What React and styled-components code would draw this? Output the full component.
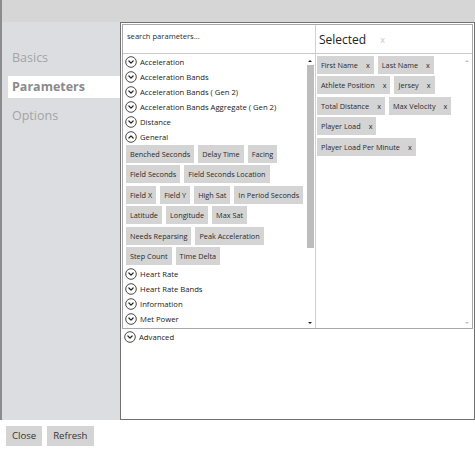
import React from 'react'
import styled, { createGlobalStyle } from 'styled-components'

const GlobalStyle = createGlobalStyle`
  html, body {
    margin: 0;
    padding: 0;
    background: #fff;
  }
  body {
    font-family: "Open Sans", "Noto Sans", sans-serif;
    color: #222;
  }
  * { box-sizing: border-box; }
`

const Frame = styled.div`
  width: 475px;
  height: 451px;
  display: flex;
  flex-direction: column;
`

const Upper = styled.div`
  height: 420px;
  display: flex;
  flex-direction: column;
  border-left: 2px solid #8c8c8c;
`

const TopBar = styled.div`
  height: 22px;
  flex-shrink: 0;
  background: #d6d6d6;
`

const Main = styled.div`
  flex: 1;
  display: flex;
  min-height: 0;
`

const Sidebar = styled.nav`
  width: 118px;
  flex-shrink: 0;
  background: #dcdde0;
  padding: 25px 0 0 6px;
  display: flex;
  flex-direction: column;
  gap: 7px;
`

const SideItem = styled.div`
  height: 22px;
  line-height: 22px;
  padding-left: 4px;
  font-size: 12.5px;
  font-weight: ${(p) => (p.active ? 700 : 400)};
  color: ${(p) => (p.active ? '#8a8a8a' : '#a4a4a4')};
  background: ${(p) => (p.active ? '#fff' : 'transparent')};
`

const Content = styled.section`
  flex: 1;
  display: flex;
  flex-direction: column;
  border: 1px solid #727272;
  background: #fff;
  padding: 1px 1px 0 1px;
`

const InnerBox = styled.div`
  height: 305px;
  border: 1px solid #a8a8a8;
  display: grid;
  grid-template-columns: 192px 1fr;
  grid-template-rows: 29px 1fr;
`

const SearchCell = styled.div`
  border-bottom: 1px solid #c8c8c8;
  padding: 6px 4px;
  font-size: 7.6px;
  color: #2a2a2a;
`

const HeaderCell = styled.div`
  border-bottom: 1px solid #c8c8c8;
  border-left: 1px solid #d0d0d0;
  padding: 3px 3px;
  display: flex;
  align-items: center;
  gap: 14px;
  font-size: 12px;
  color: #222;
`

const FaintX = styled.span`
  font-size: 9px;
  color: #c8c8c8;
`

const Pane = styled.div`
  display: flex;
  min-height: 0;
  overflow: hidden;
  border-left: ${(p) => (p.divided ? '1px solid #d0d0d0' : 'none')};
`

const ListBody = styled.div`
  flex: 1;
  display: flex;
  flex-direction: column;
  overflow: hidden;
`

const Row = styled.div`
  height: 15px;
  display: flex;
  align-items: center;
  gap: 3px;
  padding-left: 2px;
  font-size: 7.7px;
  color: #1a1a1a;
  white-space: nowrap;
  flex-shrink: 0;
`

const ChipArea = styled.div`
  display: flex;
  flex-direction: column;
  gap: 2.4px;
  padding: ${(p) => p.pad};
  flex-shrink: 0;
`

const ChipRow = styled.div`
  display: flex;
  gap: 4px;
`

const Chip = styled.span`
  height: 18px;
  line-height: 18px;
  padding: 0 4px;
  background: #d4d4d4;
  font-size: 7.3px;
  color: #2a2a2a;
  white-space: nowrap;
  display: inline-flex;
  gap: 8px;
`

const Scrollbar = styled.div`
  width: 10px;
  flex-shrink: 0;
  display: flex;
  flex-direction: column;
  align-items: center;
  padding: 6px 0 4px;
`

const Arrow = styled.span`
  width: 0;
  height: 0;
  border-left: 2px solid transparent;
  border-right: 2px solid transparent;
  ${(p) => (p.up ? 'border-bottom' : 'border-top')}: 2.5px solid ${(p) => (p.faint ? '#c4c4c4' : '#222')};
`

const Thumb = styled.span`
  width: 7px;
  height: 183px;
  margin-top: 3px;
  background: #bdbdbd;
`

const Spacer = styled.span`
  flex: 1;
`

const Outside = styled.div`
  padding-top: 0;
`

const BottomBar = styled.footer`
  height: 31px;
  display: flex;
  align-items: center;
  gap: 5px;
  padding: 0 6px;
`

const Button = styled.button`
  height: 20px;
  border: none;
  background: #d4d4d4;
  padding: 0 6px;
  font-family: inherit;
  font-size: 9.6px;
  color: #333;
`

const Toggle = ({ open }) => (
  <svg width="12" height="12" viewBox="0 0 12 12">
    <circle cx="6" cy="6" r="5.3" fill="#fff" stroke="#333" strokeWidth="0.9" />
    <path
      d={open ? 'M3.9 7 L6 4.9 L8.1 7' : 'M3.9 5 L6 7.1 L8.1 5'}
      fill="none"
      stroke="#222"
      strokeWidth="1.2"
      strokeLinecap="round"
      strokeLinejoin="round"
    />
  </svg>
)

const generalRows = [
  ['Benched Seconds', 'Delay Time', 'Facing'],
  ['Field Seconds', 'Field Seconds Location'],
  ['Field X', 'Field Y', 'High Sat', 'In Period Seconds'],
  ['Latitude', 'Longitude', 'Max Sat'],
  ['Needs Reparsing', 'Peak Acceleration'],
  ['Step Count', 'Time Delta'],
]

const selectedRows = [
  ['First Name', 'Last Name'],
  ['Athlete Position', 'Jersey'],
  ['Total Distance', 'Max Velocity'],
  ['Player Load'],
  ['Player Load Per Minute'],
]

const before = [
  'Acceleration',
  'Acceleration Bands',
  'Acceleration Bands ( Gen 2)',
  'Acceleration Bands Aggregate ( Gen 2)',
  'Distance',
]

const after = ['Heart Rate', 'Heart Rate Bands', 'Information', 'Met Power']

const App = () => (
  <Frame>
    <GlobalStyle />
    <Upper>
      <TopBar />
      <Main>
        <Sidebar>
          <SideItem>Basics</SideItem>
          <SideItem active>Parameters</SideItem>
          <SideItem>Options</SideItem>
        </Sidebar>
        <Content>
          <InnerBox>
            <SearchCell>search parameters...</SearchCell>
            <HeaderCell>
              Selected <FaintX>x</FaintX>
            </HeaderCell>
            <Pane>
              <ListBody>
                {before.map((name) => (
                  <Row key={name}>
                    <Toggle />
                    {name}
                  </Row>
                ))}
                <Row>
                  <Toggle open />
                  General
                </Row>
                <ChipArea pad="1px 0 2px 3px">
                  {generalRows.map((row, i) => (
                    <ChipRow key={i}>
                      {row.map((c) => (
                        <Chip key={c}>{c}</Chip>
                      ))}
                    </ChipRow>
                  ))}
                </ChipArea>
                {after.map((name) => (
                  <Row key={name}>
                    <Toggle />
                    {name}
                  </Row>
                ))}
              </ListBody>
              <Scrollbar>
                <Arrow up />
                <Thumb />
                <Spacer />
                <Arrow />
              </Scrollbar>
            </Pane>
            <Pane divided>
              <ListBody>
                <ChipArea pad="2px 0 0 1px">
                  {selectedRows.map((row, i) => (
                    <ChipRow key={i}>
                      {row.map((c) => (
                        <Chip key={c}>
                          {c}
                          <span>x</span>
                        </Chip>
                      ))}
                    </ChipRow>
                  ))}
                </ChipArea>
              </ListBody>
              <Scrollbar>
                <Arrow up faint />
                <Spacer />
                <Arrow faint />
              </Scrollbar>
            </Pane>
          </InnerBox>
          <Outside>
            <Row>
              <Toggle />
              Advanced
            </Row>
          </Outside>
        </Content>
      </Main>
    </Upper>
    <BottomBar>
      <Button>Close</Button>
      <Button>Refresh</Button>
    </BottomBar>
  </Frame>
)

export default App
